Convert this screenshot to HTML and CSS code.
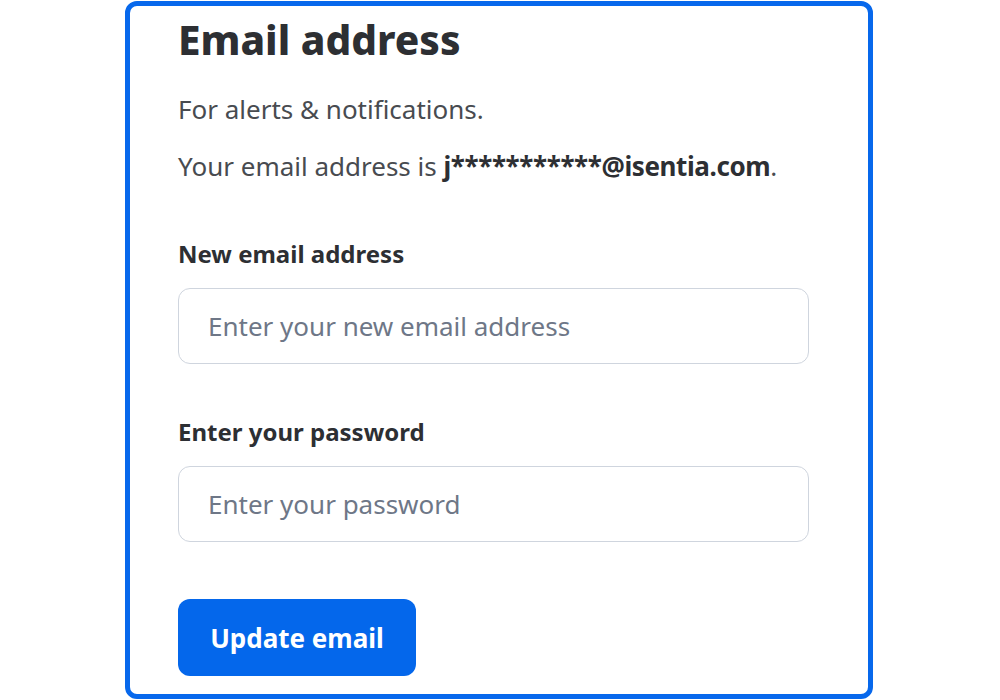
FILE: index.html
```html
<!DOCTYPE html>
<html lang="en">
<head>
    <meta charset="UTF-8">
    <meta name="viewport" content="width=device-width, initial-scale=1.0">
    <title>Email address</title>
    <link rel="stylesheet" href="styles.css">
</head>
<body>
    <div class="card">
        <h1>Email address</h1>
        <p class="hint">For alerts &amp; notifications.</p>
        <p class="hint">Your email address is <b>j***********@isentia.com</b>.</p>

        <form class="email-form">
            <div class="field">
                <label for="new-email">New email address</label>
                <input id="new-email" type="email" placeholder="Enter your new email address">
            </div>
            <div class="field">
                <label for="password">Enter your password</label>
                <input id="password" type="password" placeholder="Enter your password">
            </div>
            <button type="button" class="btn">Update email</button>
        </form>
    </div>
</body>
</html>
```

FILE: styles.css
```css
body {
    font-family: "Noto Sans", "Open Sans", sans-serif;
    background-color: #ffffff;
    margin: 0;
    padding: 0;
}
.card {
    box-sizing: border-box;
    width: 748px;
    height: 698px;
    margin: 1px 0 0 125px;
    padding: 10px 60px 0 48px;
    border: 5px solid #0768ec;
    border-radius: 12px;
    color: #484b50;
}
.card h1 {
    margin: 0 0 27px 0;
    font-size: 40.5px;
    line-height: 48px;
    font-weight: 800;
    color: #2d2f33;
}
.hint {
    margin: 0 0 21px 0;
    font-size: 26px;
    line-height: 36px;
}
.hint b {
    font-weight: 700;
    letter-spacing: -0.4px;
    color: #2d2f33;
}
.email-form {
    margin-top: 54px;
}
.field {
    margin-bottom: 52px;
}
.field label {
    display: block;
    margin-bottom: 18px;
    font-size: 24px;
    line-height: 32px;
    font-weight: 700;
    color: #2d2f33;
}
.field input {
    box-sizing: border-box;
    display: block;
    width: 631px;
    height: 76px;
    padding: 0 29px;
    border: 1.5px solid #cfd5de;
    border-radius: 12px;
    font-family: inherit;
    font-size: 26px;
    color: #2d2f33;
    outline: none;
}
.field input::placeholder {
    color: #6e7787;
}
.btn {
    display: block;
    width: 238px;
    height: 77px;
    margin-top: 57px;
    border: none;
    border-radius: 12px;
    background-color: #0467eb;
    color: #ffffff;
    font-family: inherit;
    font-size: 26px;
    font-weight: 700;
}
```
